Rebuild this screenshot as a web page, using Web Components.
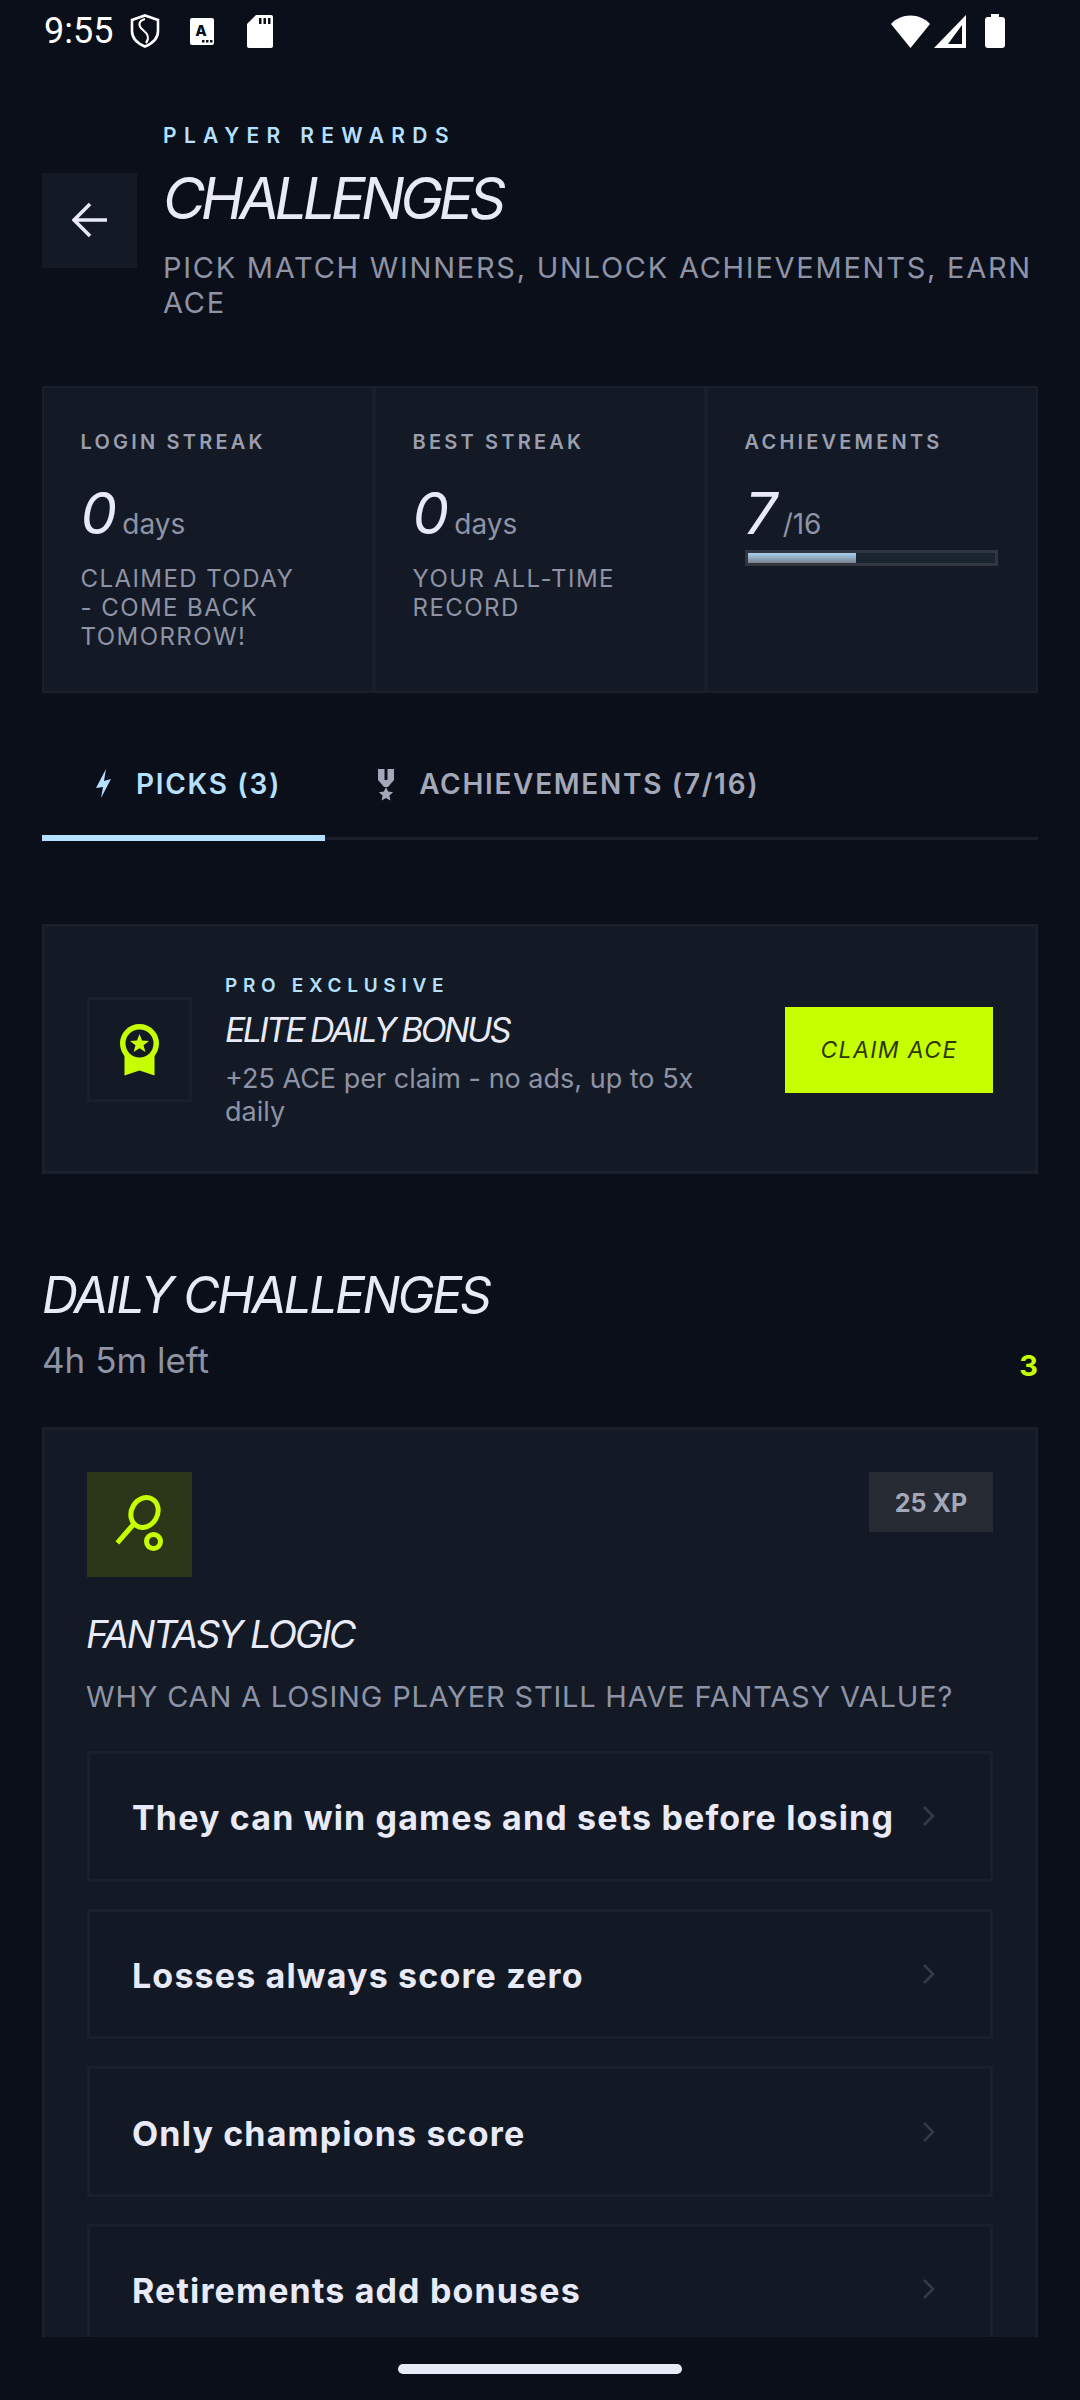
<!DOCTYPE html>
<html>
<head>
<meta charset="utf-8">
<style>
  html, body { margin: 0; height: 2400px; overflow: hidden; background: #0b0f1a; }
  body { font-family: "Inter", "Liberation Sans", sans-serif; color: #e8ebf7; }
</style>
</head>
<body>
<app-shell>
  <status-bar slot="status"></status-bar>
  <page-header>
    <span slot="eyebrow">PLAYER REWARDS</span>
    <span slot="title">CHALLENGES</span>
    <span slot="sub">PICK MATCH WINNERS, UNLOCK ACHIEVEMENTS, EARN ACE</span>
  </page-header>
  <stat-grid>
    <stat-item>
      <span slot="label">LOGIN STREAK</span><span slot="value">0</span><span slot="unit">days</span>
      <span slot="note">CLAIMED TODAY - COME BACK TOMORROW!</span>
    </stat-item>
    <stat-item>
      <span slot="label">BEST STREAK</span><span slot="value">0</span><span slot="unit">days</span>
      <span slot="note">YOUR ALL-TIME RECORD</span>
    </stat-item>
    <stat-item progress="44">
      <span slot="label">ACHIEVEMENTS</span><span slot="value">7</span><span slot="unit">/16</span>
    </stat-item>
  </stat-grid>
  <tab-bar>
    <tab-item active>
      <svg slot="icon" width="36" height="36" viewBox="0 0 36 36"><path fill="currentColor" d="M20 3 10 22l7-1-2 11 10-19-7 2z"/></svg>
      PICKS (3)
    </tab-item>
    <tab-item>
      <svg slot="icon" width="36" height="36" viewBox="0 0 36 36"><path fill="currentColor" d="M9 3h16v11l-6 7h-4l-6-7zM17 21l2.100 4.600 5 .6-3.700 3.400 1 4.900L17 32.100l-4.400 2.400 1-4.900-3.700-3.400 5-.6z"/><rect x="15.500" y="3" width="3" height="11" fill="#0b0f1a"/></svg>
      ACHIEVEMENTS (7/16)
    </tab-item>
  </tab-bar>
  <bonus-card>
    <svg slot="icon" width="60" height="60" viewBox="0 0 60 60" fill="#c6ff00">
      <path d="M14.500 36h30v20.500l-15-5-15 5z"/>
      <circle cx="29.500" cy="24.500" r="19.500"/>
      <circle cx="29.500" cy="24.500" r="14" fill="#131a25"/>
      <path d="M29.500 15l2.500 6.600 7 .3-5.500 4.400 1.900 6.800-5.900-3.900-5.900 3.900 1.900-6.800-5.500-4.400 7-.3z"/>
    </svg>
    <span slot="eyebrow">PRO EXCLUSIVE</span>
    <span slot="title">ELITE DAILY BONUS</span>
    <span slot="desc">+25 ACE per claim - no ads, up to 5x daily</span>
    <span slot="action">CLAIM ACE</span>
  </bonus-card>
  <section-head>
    <span slot="title">DAILY CHALLENGES</span>
    <span slot="sub">4h 5m left</span>
    <span slot="count">3</span>
  </section-head>
  <challenge-card>
    <svg slot="icon" width="60" height="60" viewBox="0 0 60 60" fill="none" stroke="#c6ff00" stroke-width="5">
      <ellipse cx="34.500" cy="17.500" rx="13" ry="15.500" transform="rotate(30 34.500 17.500)"/>
      <path d="M22 31 9 46" stroke-linecap="square"/>
      <circle cx="43.500" cy="46.500" r="7"/>
    </svg>
    <span slot="xp">25 XP</span>
    <span slot="title">FANTASY LOGIC</span>
    <span slot="question">WHY CAN A LOSING PLAYER STILL HAVE FANTASY VALUE?</span>
    <option-row>They can win games and sets before losing</option-row>
    <option-row>Losses always score zero</option-row>
    <option-row>Only champions score</option-row>
    <option-row>Retirements add bonuses</option-row>
  </challenge-card>
</app-shell>

<script>
function shadowFrom(el, html) {
  const t = document.createElement('template');
  t.innerHTML = html;
  el.attachShadow({ mode: 'open' }).appendChild(t.content.cloneNode(true));
}

class AppShell extends HTMLElement {
  constructor() {
    super();
    shadowFrom(this, `
      <style>
        :host { display: flex; flex-direction: column; height: 2400px; }
        .scroll { height: 2275px; overflow: hidden; padding: 0 42px; box-sizing: border-box; }
        .foot { flex: 1; display: flex; justify-content: center; padding-top: 27px; }
        .pill { width: 284px; height: 10px; border-radius: 5px; background: #e8ebf7; }
      </style>
      <slot name="status"></slot>
      <div class="scroll"><slot></slot></div>
      <div class="foot"><div class="pill"></div></div>`);
  }
}

class StatusBar extends HTMLElement {
  constructor() {
    super();
    shadowFrom(this, `
      <style>
        :host { display: flex; align-items: center; height: 62px; padding: 0 75px 0 44px; box-sizing: border-box; color: #fff; }
        .time { font: 400 36px/1 "Roboto", sans-serif; width: 71px; letter-spacing: 0; }
        svg { display: block; flex: none; }
        .left { display: flex; align-items: center; flex: 1; }
        .right { display: flex; align-items: center; }
      </style>
      <div class="left">
        <span class="time">9:55</span>
        <svg style="margin-left:15px" width="30" height="34" viewBox="0 0 30 34" fill="none" stroke="#fff" stroke-width="2.600">
          <path d="M15 1.500 28 6v11c0 7.500-5.500 12.500-13 15.500C7.500 29.500 2 24.500 2 17V6z"/>
          <path d="M15 5C8 7 8 12 13 16c5 4 7 8 3 13" stroke-width="2.200"/>
        </svg>
        <svg style="margin-left:30px" width="24" height="27" viewBox="0 0 24 27">
          <rect width="24" height="27" rx="2" fill="#fff"/>
          <text x="11" y="18" font-family="Inter, sans-serif" font-weight="800" font-size="15" text-anchor="middle" fill="#0b0f1a">A</text>
          <path d="M12 22h2.500v2.500H12zM16 22h2.500v2.500H16zM20 22h2.500v2.500H20z" fill="#0b0f1a"/>
        </svg>
        <svg style="margin-left:33px" width="26" height="33" viewBox="0 0 26 33">
          <path d="M9 0h15a2 2 0 0 1 2 2v29a2 2 0 0 1-2 2H2a2 2 0 0 1-2-2V9z" fill="#fff"/>
          <path d="M12 3h2.500v6H12zM16.500 3H19v6h-2.500zM21 3h2.500v6H21z" fill="#0b0f1a"/>
        </svg>
      </div>
      <div class="right">
        <svg width="39" height="33" viewBox="0 0 39 33"><path d="M19.500 33 0 9C5 3.500 12 .5 19.500.5S34 3.500 39 9z" fill="#fff"/></svg>
        <svg style="margin-left:4px" width="32" height="33" viewBox="0 0 32 33" fill="#fff" fill-rule="evenodd"><path d="M32 0v33H0zM28 10 14 29h14z"/></svg>
        <svg style="margin-left:19px" width="20" height="34" viewBox="0 0 20 34"><path d="M6 0h8v3h3a3 3 0 0 1 3 3v25a3 3 0 0 1-3 3H3a3 3 0 0 1-3-3V6a3 3 0 0 1 3-3h3z" fill="#fff"/></svg>
      </div>`);
  }
}

class PageHeader extends HTMLElement {
  constructor() {
    super();
    shadowFrom(this, `
      <style>
        :host { display: flex; align-items: center; gap: 26px; padding-top: 62px; }
        .back { width: 95px; height: 95px; flex: none; background: #131a25; display: flex; align-items: center; justify-content: center; margin-top: -4px; }
        .eyebrow { font-size: 21px; line-height: 24px; font-weight: 600; letter-spacing: 0.35em; color: #b5e0ff; }
        .title { font-size: 58px; line-height: 64px; font-style: italic; font-weight: 400; letter-spacing: -0.08em; margin-top: 18px; }
        .sub { font-size: 29px; line-height: 35px; letter-spacing: 0.06em; color: #8f93a6; margin-top: 20px; }
      </style>
      <div class="back">
        <svg width="36" height="36" viewBox="0 0 36 36" fill="none" stroke="#e8ebf7" stroke-width="3.600">
          <path d="M35 18H2M18 2 2 18l16 16"/>
        </svg>
      </div>
      <div class="text">
        <div class="eyebrow"><slot name="eyebrow"></slot></div>
        <div class="title"><slot name="title"></slot></div>
        <div class="sub"><slot name="sub"></slot></div>
      </div>`);
  }
}

class StatGrid extends HTMLElement {
  constructor() {
    super();
    shadowFrom(this, `
      <style>
        :host { display: grid; grid-template-columns: repeat(3, 1fr); height: 307px; margin-top: 66px; }
      </style>
      <slot></slot>`);
  }
}

class StatItem extends HTMLElement {
  constructor() {
    super();
    const pct = this.getAttribute('progress');
    shadowFrom(this, `
      <style>
        :host { display: block; background: #131a25; border: 2px solid #1a202b; padding: 42px 38px 0 36.500px; box-sizing: border-box; }
        .label { font-size: 20px; line-height: 24px; font-weight: 600; letter-spacing: 0.16em; color: #9a9eae; }
        .row { display: flex; align-items: baseline; gap: 7px; margin-top: 27px; }
        .value { font-size: 58px; line-height: 64px; font-style: italic; letter-spacing: -0.03em; }
        .unit { font-size: 28px; color: #8f93a6; }
        .note { font-size: 24px; line-height: 29px; letter-spacing: 0.06em; color: #8f93a6; margin-top: 19px; padding-right: 20px; }
        .bar { height: 16px; border: 3px solid #30353f; background: #1a2530; margin-top: 5px; box-sizing: border-box; }
        .fill { height: 100%; background: linear-gradient(#a6d2ee, #7c8090); }
      </style>
      <div class="label"><slot name="label"></slot></div>
      <div class="row">
        <span class="value"><slot name="value"></slot></span>
        <span class="unit"><slot name="unit"></slot></span>
      </div>
      ${pct ? `<div class="bar"><div class="fill" style="width:${pct}%"></div></div>` : ''}
      <div class="note"><slot name="note"></slot></div>`);
  }
}

class TabBar extends HTMLElement {
  constructor() {
    super();
    shadowFrom(this, `
      <style>
        :host { display: flex; height: 100px; margin-top: 48px; position: relative; }
        .line { position: absolute; left: 0; right: 0; bottom: 1px; height: 3px; background: #1a202b; }
        ::slotted(tab-item) { position: relative; }
      </style>
      <div class="line"></div>
      <slot></slot>`);
  }
}

class TabItem extends HTMLElement {
  constructor() {
    super();
    shadowFrom(this, `
      <style>
        :host { display: flex; align-items: center; gap: 14px; padding: 0 44px 14px 44px; box-sizing: border-box; font-size: 28px; font-weight: 600; letter-spacing: 1.7px; color: #a3a7b8; white-space: nowrap; }
        :host([active]) { color: #b5e0ff; border-bottom: 6px solid #b5e0ff; padding-bottom: 8px; }
        ::slotted(svg) { display: block; flex: none; }
      </style>
      <slot name="icon"></slot><slot></slot>`);
  }
}

class BonusCard extends HTMLElement {
  constructor() {
    super();
    shadowFrom(this, `
      <style>
        :host { display: flex; align-items: center; gap: 33px; height: 250px; margin-top: 83px; padding: 0 42px; background: #131a25; border: 3px solid #1a202b; box-sizing: border-box; }
        .icon { width: 105px; height: 105px; flex: none; border: 3px solid #1a202b; box-sizing: border-box; display: flex; align-items: center; justify-content: center; }
        ::slotted(svg) { display: block; }
        .text { flex: 1; min-width: 0; margin-top: 4px; }
        .eyebrow { font-size: 19px; line-height: 22px; font-weight: 600; letter-spacing: 0.3em; color: #b5e0ff; }
        .title { font-size: 34px; line-height: 42px; font-style: italic; letter-spacing: -0.077em; margin-top: 12px; }
        .desc { font-size: 27px; line-height: 33px; color: #8f93a6; margin-top: 11px; max-width: 505px; }
        .action { flex: none; width: 208px; height: 86px; margin: 2px 0 0 -3px; display: flex; align-items: center; justify-content: center; background: #c6ff00; color: #2c3800; font-size: 23px; font-style: italic; letter-spacing: 0.06em; }
      </style>
      <div class="icon"><slot name="icon"></slot></div>
      <div class="text">
        <div class="eyebrow"><slot name="eyebrow"></slot></div>
        <div class="title"><slot name="title"></slot></div>
        <div class="desc"><slot name="desc"></slot></div>
      </div>
      <div class="action"><slot name="action"></slot></div>`);
  }
}

class SectionHead extends HTMLElement {
  constructor() {
    super();
    shadowFrom(this, `
      <style>
        :host { display: flex; justify-content: space-between; align-items: flex-end; margin-top: 93px; }
        .title { font-size: 50px; line-height: 56px; font-style: italic; letter-spacing: -0.052em; }
        .sub { font-size: 35px; line-height: 42px; color: #8f93a6; margin-top: 16px; }
        .count { font-size: 29px; line-height: 42px; font-weight: 700; color: #c6ff00; margin-bottom: -6px; }
      </style>
      <div>
        <div class="title"><slot name="title"></slot></div>
        <div class="sub"><slot name="sub"></slot></div>
      </div>
      <div class="count"><slot name="count"></slot></div>`);
  }
}

class ChallengeCard extends HTMLElement {
  constructor() {
    super();
    shadowFrom(this, `
      <style>
        :host { display: block; margin-top: 46px; padding: 42px; background: #131a25; border: 3px solid #1a202b; box-sizing: border-box; }
        .top { display: flex; justify-content: space-between; align-items: flex-start; }
        .icon { width: 105px; height: 105px; background: #2c3618; display: flex; align-items: center; justify-content: center; }
        ::slotted(svg) { display: block; }
        .xp { width: 124px; height: 60px; padding-top: 2px; box-sizing: border-box; background: #252a33; color: #a3a7b8; font-size: 25px; font-weight: 700; display: flex; align-items: center; justify-content: center; }
        .title { font-size: 38px; line-height: 44px; font-style: italic; letter-spacing: -0.06em; margin-top: 35px; margin-left: -1px; }
        .question { font-size: 29px; line-height: 36px; letter-spacing: 0.8px; color: #8f93a6; margin-top: 23px; margin-left: -1px; }
        .options { display: flex; flex-direction: column; gap: 27px; margin-top: 36px; }
      </style>
      <div class="top">
        <div class="icon"><slot name="icon"></slot></div>
        <div class="xp"><slot name="xp"></slot></div>
      </div>
      <div class="title"><slot name="title"></slot></div>
      <div class="question"><slot name="question"></slot></div>
      <div class="options"><slot></slot></div>`);
  }
}

class OptionRow extends HTMLElement {
  constructor() {
    super();
    shadowFrom(this, `
      <style>
        :host { display: flex; align-items: center; justify-content: space-between; height: 130.670px; padding: 0 55px 0 42px; background: #121824; border: 3px solid #1a202b; box-sizing: border-box; font-size: 34px; font-weight: 700; letter-spacing: 1.150px; white-space: nowrap; }
        span { padding-top: 3px; }
        svg { display: block; flex: none; }
      </style>
      <span><slot></slot></span>
      <svg width="13" height="20" viewBox="0 0 13 20" fill="none" stroke="#343a48" stroke-width="2.500"><path d="M2 1l9 9-9 9"/></svg>`);
  }
}

customElements.define('app-shell', AppShell);
customElements.define('status-bar', StatusBar);
customElements.define('page-header', PageHeader);
customElements.define('stat-grid', StatGrid);
customElements.define('stat-item', StatItem);
customElements.define('tab-bar', TabBar);
customElements.define('tab-item', TabItem);
customElements.define('bonus-card', BonusCard);
customElements.define('section-head', SectionHead);
customElements.define('challenge-card', ChallengeCard);
customElements.define('option-row', OptionRow);
</script>
</body>
</html>
